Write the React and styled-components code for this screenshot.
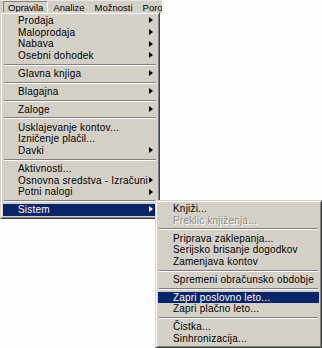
import React from "react";
import styled, { createGlobalStyle } from "styled-components";

const Global = createGlobalStyle`
  html, body { margin: 0; padding: 0; background: #fcfdfc; }
  body { font-family: "Liberation Sans", Arial, sans-serif; }
`;

const Frame = styled.div`
  position: relative;
  width: 322px;
  height: 348px;
  overflow: hidden;
  background: #fcfdfc;
  font-family: "Liberation Sans", Arial, sans-serif;
  font-size: 10px;
  color: #000;
`;

const MenuBar = styled.div`
  display: flex;
  align-items: stretch;
  width: 162px;
  height: 13px;
  background: #d4d0c8;
  border-top: 1px solid #e6e4de;
  box-sizing: border-box;
  padding-left: 3px;
  font-size: 9.5px;
  white-space: nowrap;
  overflow: hidden;
`;

const BarItem = styled.div`
  display: flex;
  align-items: center;
  flex-shrink: 0;
  padding: 0 4px;
  box-sizing: border-box;
  border: 1px solid transparent;
  ${(p) => p.$pressed && `border-color: #808080 #ffffff #ffffff #808080;`}
  line-height: 11px;
`;

const Menu = styled.div`
  position: absolute;
  left: ${(p) => p.$left}px;
  top: ${(p) => p.$top}px;
  width: ${(p) => p.$width}px;
  box-sizing: border-box;
  background: #d4d0c8;
  border: 1px solid;
  border-color: #d4d0c8 #404040 #404040 #d4d0c8;
  box-shadow: inset 1px 1px 0 #ffffff, inset -1px -1px 0 #808080;
  padding: 2px;
  display: flex;
  flex-direction: column;
`;

const Item = styled.div`
  position: relative;
  height: 11.7px;
  line-height: 11.7px;
  padding-left: 15px;
  letter-spacing: 0.2px;
  white-space: nowrap;
  background: ${(p) => (p.$active ? "#0a246a" : "transparent")};
  color: ${(p) => (p.$active ? "#ffffff" : p.$disabled ? "#8a8a86" : "#000")};
  ${(p) => p.$disabled && `text-shadow: 1px 1px 0 #ffffff;`}
`;

const Arrow = styled.span`
  position: absolute;
  right: 4.5px;
  top: 50%;
  margin-top: -3.5px;
  width: 0;
  height: 0;
  border-top: 3.5px solid transparent;
  border-bottom: 3.5px solid transparent;
  border-left: 4px solid ${(p) => (p.$active ? "#ffffff" : "#000")};
`;

const Separator = styled.div`
  height: 6.2px;
  display: flex;
  flex-direction: column;
  justify-content: center;
  margin: 0 1px;
  &::before {
    content: "";
    display: block;
    height: 1px;
    background: #808080;
  }
  &::after {
    content: "";
    display: block;
    height: 1px;
    background: #ffffff;
  }
`;

const mainItems = [
  ["Prodaja", true],
  ["Maloprodaja", true],
  ["Nabava", true],
  ["Osebni dohodek", true],
  "-",
  ["Glavna knjiga", true],
  "-",
  ["Blagajna", true],
  "-",
  ["Zaloge", true],
  "-",
  ["Usklajevanje kontov...", false],
  ["Izničenje plačil...", false],
  ["Davki", true],
  "-",
  ["Aktivnosti...", false],
  ["Osnovna sredstva - Izračuni", true],
  ["Potni nalogi", true],
  "-",
  ["Sistem", true, "active"],
];

const subItems = [
  ["Knjiži..."],
  ["Preklic knjiženja...", "disabled"],
  "-",
  ["Priprava zaklepanja..."],
  ["Serijsko brisanje dogodkov"],
  ["Zamenjava kontov"],
  "-",
  ["Spremeni obračunsko obdobje"],
  "-",
  ["Zapri poslovno leto...", "active"],
  ["Zapri plačno leto..."],
  "-",
  ["Čistka..."],
  ["Sinhronizacija..."],
];

export default function App() {
  return (
    <>
      <Global />
      <Frame>
        <MenuBar>
          <BarItem $pressed>Opravila</BarItem>
          <BarItem>Analize</BarItem>
          <BarItem>Možnosti</BarItem>
          <BarItem>Poro</BarItem>
        </MenuBar>
        <Menu $left={0} $top={12} $width={160}>
          {mainItems.map((it, i) =>
            it === "-" ? (
              <Separator key={i} />
            ) : (
              <Item key={i} $active={it[2] === "active"}>
                {it[0]}
                {it[1] && <Arrow $active={it[2] === "active"} />}
              </Item>
            )
          )}
        </Menu>
        <Menu $left={155} $top={200} $width={167}>
          {subItems.map((it, i) =>
            it === "-" ? (
              <Separator key={i} />
            ) : (
              <Item
                key={i}
                $active={it[1] === "active"}
                $disabled={it[1] === "disabled"}
              >
                {it[0]}
              </Item>
            )
          )}
        </Menu>
      </Frame>
    </>
  );
}
